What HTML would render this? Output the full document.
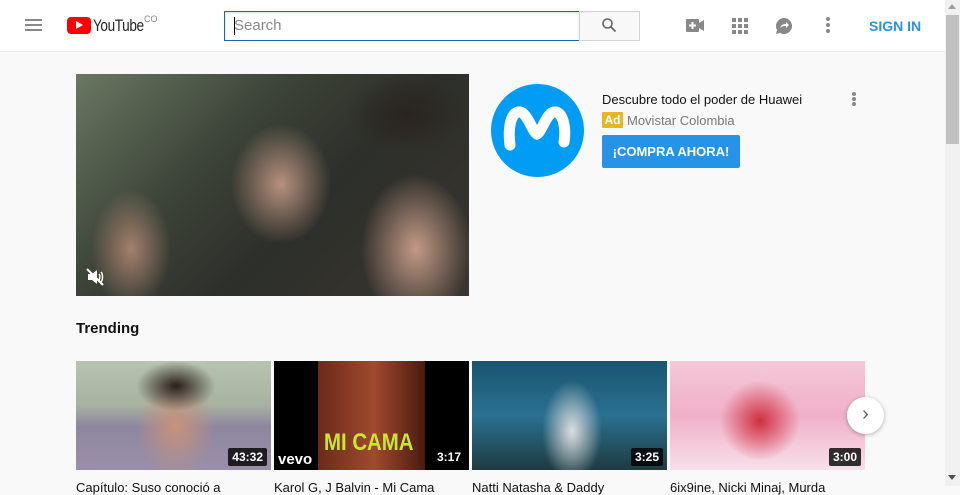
<!DOCTYPE html>
<html><head><meta charset="utf-8"><style>
*{margin:0;padding:0;box-sizing:border-box}
body{width:960px;height:486px;overflow:hidden;background:#f9f9f9;font-family:"Liberation Sans",Arial,sans-serif;position:relative}
.hdr{position:absolute;left:0;top:0;width:945px;height:52px;background:#fff;border-bottom:1px solid #eee}
.abs{position:absolute}
.sb{position:absolute;left:945px;top:0;width:15px;height:486px;background:#f1f1f1}
.thumb{position:absolute;top:361px;width:195px;height:109px;overflow:hidden}
.dur{position:absolute;right:4px;bottom:4px;background:rgba(0,0,0,.8);color:#fff;font-size:12px;font-weight:bold;padding:2px 4px;border-radius:2px}
.title{position:absolute;top:480px;font-size:13px;color:#111}
</style></head><body>
<div class="hdr">
 <div class="abs" style="left:25px;top:19px;width:17px;height:2px;background:#888;box-shadow:0 5px 0 #888,0 10px 0 #888"></div>
 <div class="abs" style="left:67px;top:17px;width:24px;height:17px;background:#f00;border-radius:4px"></div>
 <div class="abs" style="left:76px;top:21px;width:0;height:0;border-left:7px solid #fff;border-top:4.5px solid transparent;border-bottom:4.5px solid transparent"></div>
 <div class="abs" style="left:93px;top:16px;font-size:17px;letter-spacing:-0.5px;color:#222;transform:scaleX(.8);transform-origin:left;font-family:'Liberation Sans Narrow','Liberation Sans',sans-serif">YouTube</div>
 <div class="abs" style="left:144px;top:14px;font-size:9px;color:#888">CO</div>
 <div class="abs" style="left:224px;top:11px;width:356px;height:30px;border:1px solid #1c62b9;background:#fff;box-shadow:inset 0 1px 2px #ddd"></div>
 <div class="abs" style="left:234px;top:17px;font-size:15px;color:#888">Search</div>
 <div class="abs" style="left:234px;top:17px;width:1px;height:18px;background:#000"></div>
 <div class="abs" style="left:579px;top:11px;width:61px;height:30px;border:1px solid #d3d3d3;background:#f8f8f8"></div>
 <svg class="abs" style="left:601px;top:17px" width="16" height="16" viewBox="0 0 16 16"><circle cx="6.5" cy="6.5" r="4.5" fill="none" stroke="#666" stroke-width="1.6"/><path d="M10 10l4.5 4.5" stroke="#666" stroke-width="1.8"/></svg>
 <svg class="abs" style="left:686px;top:18px" width="19" height="15" viewBox="0 0 19 15"><rect x="0" y="1" width="13" height="13" rx="1" fill="#888"/><path d="M13 5l5-3v11l-5-3z" fill="#888"/><path d="M6.5 4v7M3 7.5h7" stroke="#fff" stroke-width="2"/></svg>
 <svg class="abs" style="left:732px;top:18px" width="16" height="16" viewBox="0 0 16 16" fill="#888"><rect x="0" y="0" width="4" height="4"/><rect x="6" y="0" width="4" height="4"/><rect x="12" y="0" width="4" height="4"/><rect x="0" y="6" width="4" height="4"/><rect x="6" y="6" width="4" height="4"/><rect x="12" y="6" width="4" height="4"/><rect x="0" y="12" width="4" height="4"/><rect x="6" y="12" width="4" height="4"/><rect x="12" y="12" width="4" height="4"/></svg>
 <svg class="abs" style="left:775px;top:17px" width="18" height="18" viewBox="0 0 18 18"><circle cx="9" cy="9" r="8" fill="#888"/><path d="M2 13l-1 4 4-1z" fill="#888"/><path d="M5 11c1-3 3-4 6-4V5l3 3-3 3V9c-2 0-4 0-6 2z" fill="#fff"/></svg>
 <div class="abs" style="left:826px;top:17px;width:4px;height:4px;border-radius:2px;background:#888;box-shadow:0 6px 0 #888,0 12px 0 #888"></div>
 <div class="abs" style="left:869px;top:18px;font-size:14px;font-weight:bold;color:#2793e6">SIGN IN</div>
</div>
<div class="sb"><div class="abs" style="left:3px;top:4px;border-left:4px solid transparent;border-right:4px solid transparent;border-bottom:5px solid #a0a0a0;width:0;height:0"></div><div class="abs" style="left:1px;top:15px;width:13px;height:129px;background:#c1c1c1"></div><div class="abs" style="left:3px;top:475px;border-left:4px solid transparent;border-right:4px solid transparent;border-top:5px solid #505050;width:0;height:0"></div></div>

<div class="abs" style="left:76px;top:74px;width:393px;height:222px;background:radial-gradient(ellipse 55px 75px at 340px 175px,#c39a86,transparent),radial-gradient(ellipse 50px 60px at 205px 110px,#b8907e,transparent),radial-gradient(ellipse 40px 60px at 55px 175px,#a57f6d,transparent),radial-gradient(ellipse 60px 40px at 330px 40px,#2a2420,transparent),linear-gradient(135deg,#6a7862 0%,#3c4338 35%,#2d2f2a 60%,#3a3530 100%)"></div>
<svg class="abs" style="left:85px;top:267px" width="20" height="20" viewBox="0 0 20 20"><path d="M3 7h4l5-4v14l-5-4H3z" fill="#fff"/><path d="M2 2l16 16" stroke="#fff" stroke-width="2"/><path d="M14 7c1 1 1 5 0 6M16 5c2 2 2 8 0 10" stroke="#fff" stroke-width="1.5" fill="none"/></svg>

<div class="abs" style="left:491px;top:84px;width:93px;height:93px;border-radius:50%;background:#019df4"></div>
<svg class="abs" style="left:500px;top:100px" width="75" height="60" viewBox="0 0 75 60"><path d="M10 45C8 30 10 14 18 12c9-2 14 20 19 22 5-2 10-24 19-22 8 2 10 18 8 30" fill="none" stroke="#fff" stroke-width="11" stroke-linecap="round"/></svg>
<div class="abs" style="left:602px;top:92px;font-size:13px;color:#111">Descubre todo el poder de Huawei</div>
<div class="abs" style="left:852px;top:92px;width:4px;height:4px;border-radius:2px;background:#888;box-shadow:0 5px 0 #888,0 10px 0 #888"></div>
<div class="abs" style="left:602px;top:112px;width:21px;height:16px;background:#e9b524;color:#fff;font-size:12px;font-weight:bold;text-align:center;line-height:16px;border-radius:1px">Ad</div>
<div class="abs" style="left:627px;top:113px;font-size:13px;color:#777">Movistar Colombia</div>
<div class="abs" style="left:602px;top:135px;width:138px;height:33px;background:#2793e6;border-radius:2px;color:#fff;font-size:13px;font-weight:bold;text-align:center;line-height:33px">¡COMPRA AHORA!</div>

<div class="abs" style="left:76px;top:320px;font-size:15px;font-weight:bold;color:#111">Trending</div>

<div class="thumb" style="left:76px;background:radial-gradient(ellipse 40px 25px at 100px 25px,#2a1e1a,transparent),radial-gradient(ellipse 40px 50px at 100px 65px,#c8927a,transparent),linear-gradient(180deg,#b7c4b1 0%,#a7b3a0 40%,#8e86a0 60%,#9a8fa8 100%)"><div class="dur">43:32</div></div>
<div class="thumb" style="left:274px;background:linear-gradient(90deg,#000 0,#000 44px,#6a2a1a 44px,#a04a30 100px,#4a1a10 151px,#000 151px)"><div class="abs" style="left:50px;top:68px;font-size:24px;font-weight:bold;color:#c8e632;transform:scaleX(.85);transform-origin:left">MI CAMA</div><div class="abs" style="left:4px;top:90px;font-size:15px;font-weight:bold;color:#fff">vevo</div><div class="dur">3:17</div></div>
<div class="thumb" style="left:472px;background:radial-gradient(ellipse 30px 50px at 100px 70px,#ddd,transparent),linear-gradient(180deg,#1b5570 0%,#2a7090 50%,#1f3a40 100%)"><div class="dur">3:25</div></div>
<div class="thumb" style="left:670px;background:radial-gradient(ellipse 40px 40px at 90px 60px,#d03040,transparent),linear-gradient(180deg,#f4c8d8 0%,#f0b0c8 50%,#f7e0ea 100%)"><div class="dur">3:00</div></div>
<div class="abs" style="left:847px;top:397px;width:37px;height:37px;border-radius:50%;background:#fff;box-shadow:0 1px 4px rgba(0,0,0,.3);color:#666;font-size:20px;text-align:center;line-height:35px">›</div>

<div class="title" style="left:76px">Capítulo: Suso conoció a</div>
<div class="title" style="left:274px">Karol G, J Balvin - Mi Cama</div>
<div class="title" style="left:472px">Natti Natasha &amp; Daddy</div>
<div class="title" style="left:670px">6ix9ine, Nicki Minaj, Murda</div>
</body></html>
